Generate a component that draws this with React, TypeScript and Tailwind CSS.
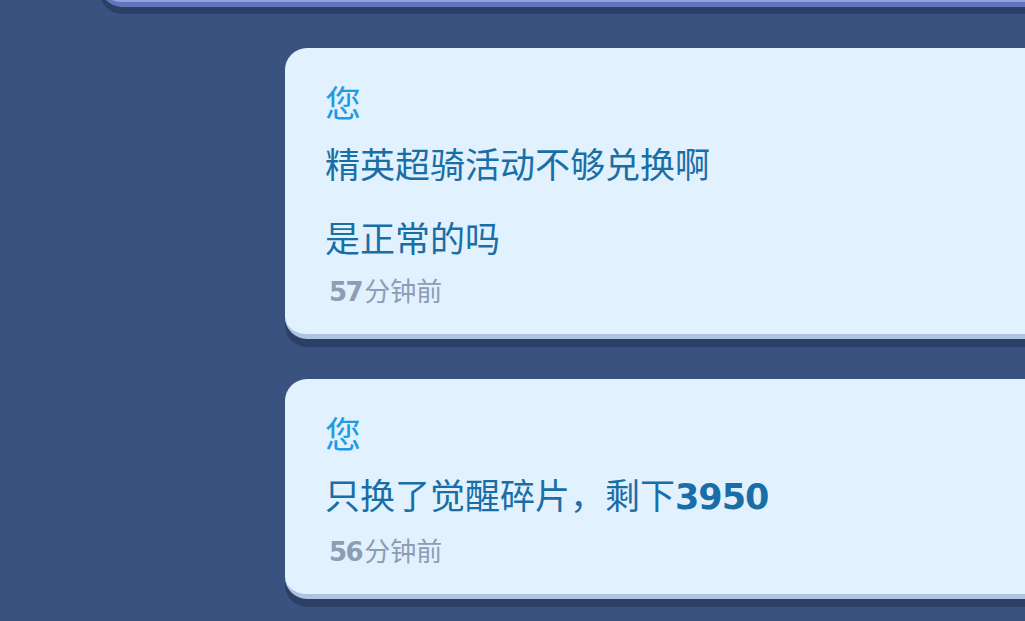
import React from 'react'

type Message = {
    id: number
    lines: React.ReactNode
    minutes: number
}

const numFont = {fontFamily: '"DejaVu Sans", "Liberation Sans", sans-serif'}

const messages: Message[] = [
    {
        id: 1,
        lines: '精英超骑活动不够兑换啊\n\n是正常的吗',
        minutes: 57,
    },
    {
        id: 2,
        lines: (
            <>
                只换了觉醒碎片，剩下
                <span className="font-bold leading-none tracking-[-1px]" style={numFont}>3950</span>
            </>
        ),
        minutes: 56,
    },
]

function Bubble({msg}: { msg: Message }) {
    return (
        <div
            className="ml-[285px] mr-[-40px] rounded-[22px] bg-[#e1f1fe] border-b-[5px] border-[#aec5df] shadow-[0_8px_0_#2c3f66] pl-10 pt-[33px] pb-[28px]">
            <div className="text-[36px] leading-[40px] text-[#1f9ae4]">您</div>
            <div className="mt-[23px] text-[35px] leading-[37px] text-[#1a6ea8] whitespace-pre-wrap">
                {msg.lines}
            </div>
            <div className="mt-[19px] ml-[4px] text-[26px] leading-[32px] text-[#8e9cb4]">
                <span className="font-bold leading-none tracking-[-1.5px] mr-[2px]" style={numFont}>{msg.minutes}</span>
                分钟前
            </div>
        </div>
    )
}

export default function App() {
    return (
        <div
            className="w-[1025px] h-[621px] overflow-hidden bg-[#39527f] flex flex-col"
            style={{fontFamily: '"Noto Sans CJK SC", "Noto Sans", sans-serif'}}
        >
            {/* previous card, mostly scrolled off */}
            <div
                className="mt-[-53px] ml-[100px] mr-[-40px] h-[60px] shrink-0 rounded-[22px] bg-[#8fa1e2] border-b-[5px] border-[#6474bb] shadow-[0_7px_0_#2c3f66]"/>

            <div className="mt-[41px] flex flex-col gap-[40px]">
                {messages.map((m) => (
                    <Bubble key={m.id} msg={m}/>
                ))}
            </div>
        </div>
    )
}
